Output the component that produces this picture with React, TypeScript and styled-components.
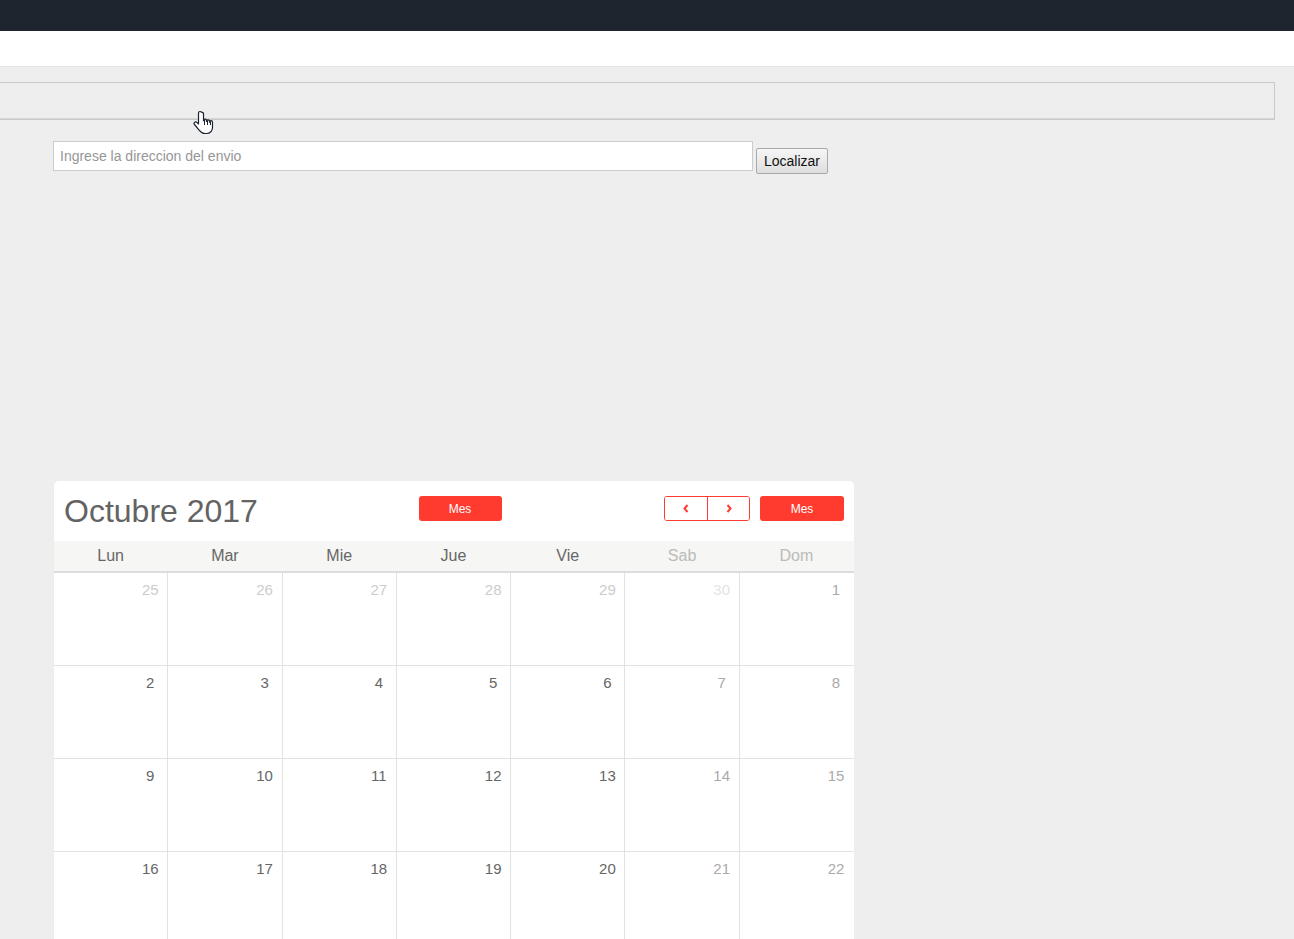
import React from "react";
import styled, { createGlobalStyle } from "styled-components";

const Global = createGlobalStyle`
  html, body { margin: 0; padding: 0; overflow: hidden; }
  body { background: #eeeeee; font-family: "Liberation Sans", Arial, sans-serif; }
  * { box-sizing: border-box; }
`;

const Page = styled.div`
  position: relative;
  height: 939px;
  overflow: hidden;
`;

const TopBar = styled.div`
  height: 31px;
  background: #1f252e;
`;

const WhiteBar = styled.div`
  height: 36px;
  background: #ffffff;
  border-bottom: 1px solid #e4e4e4;
`;

const Content = styled.div`
  padding-top: 15px;
`;

const FrameBox = styled.div`
  margin-left: -20px;
  width: 1295px;
  height: 38px;
  border: 1px solid #c9c9c9;
  box-shadow: inset 0 -1px 0 #d6d6d6;
`;

const SearchRow = styled.div`
  display: flex;
  align-items: flex-start;
  gap: 3px;
  padding-left: 53px;
  margin-top: 21px;
`;

const AddressInput = styled.input`
  width: 700px;
  height: 30px;
  border: 1px solid #cccccc;
  background: #ffffff;
  padding: 0 6px;
  font-family: "Liberation Sans", Arial, sans-serif;
  font-size: 14px;
  color: #333;
  outline: none;
  &::placeholder { color: #969696; }
`;

const LocateButton = styled.button`
  margin-top: 7px;
  height: 26px;
  width: 72px;
  padding: 0;
  border: 1px solid #a9a9a9;
  border-radius: 2px;
  background: linear-gradient(#f6f6f6, #dedede);
  font-family: "Liberation Sans", Arial, sans-serif;
  font-size: 14px;
  color: #111;
`;

const Calendar = styled.div`
  margin: 307px 0 0 54px;
  width: 800px;
  background: #ffffff;
  border-radius: 5px 5px 0 0;
`;

const CalHeader = styled.div`
  display: flex;
  align-items: flex-start;
  height: 60px;
  padding: 0 10px;
`;

const Side = styled.div<{ $end?: boolean }>`
  flex: 1;
  display: flex;
  justify-content: ${(p) => (p.$end ? "flex-end" : "flex-start")};
  gap: 10px;
  padding-top: 15px;
`;

const Title = styled.h2`
  margin: 0;
  margin-top: -3px;
  font-weight: normal;
  font-size: 32px;
  line-height: 36px;
  color: #636363;
`;

const RedButton = styled.button<{ $offset?: number; $w?: number }>`
  margin-top: 15px;
  margin-left: ${(p) => p.$offset ?? 0}px;
  width: ${(p) => p.$w ?? 83}px;
  height: 25px;
  border: none;
  border-radius: 3px;
  background: #ff3b30;
  color: #ffffff;
  font-family: "Liberation Sans", Arial, sans-serif;
  font-size: 12px;
  padding: 0;
`;

const NavGroup = styled.div`
  display: flex;
  height: 25px;
  border: 1px solid #ff3b30;
  border-radius: 3px;
  overflow: hidden;
`;

const NavButton = styled.button<{ $first?: boolean }>`
  width: ${(p) => (p.$first ? 43 : 41)}px;
  height: 23px;
  border: none;
  border-right: ${(p) => (p.$first ? "1px solid #ff3b30" : "none")};
  background: #ffffff;
  padding: 0;
  display: flex;
  align-items: center;
  justify-content: center;
`;

const DayHeader = styled.div`
  display: grid;
  grid-template-columns: repeat(7, 1fr);
  height: 32px;
  background: #f6f6f4;
  border-bottom: 2px solid #dcdcdc;
`;

const DayName = styled.div<{ $weekend?: boolean }>`
  text-align: center;
  font-size: 16px;
  line-height: 29px;
  padding-right: 1px;
  color: ${(p) => (p.$weekend ? "#bbbbbb" : "#666666")};
`;

const Week = styled.div`
  display: grid;
  grid-template-columns: repeat(7, 1fr);
  height: 93px;
  border-bottom: 1px solid #e2e2e2;
`;

const Cell = styled.div<{ $last?: boolean }>`
  display: flex;
  justify-content: flex-end;
  align-items: flex-start;
  border-right: ${(p) => (p.$last ? "none" : "1px solid #e2e2e2")};
  padding: 8px ${(p) => (p.$last ? 6 : 5)}px 0 0;
`;

const DateNum = styled.span<{ $color: string }>`
  width: 24px;
  text-align: center;
  font-size: 15px;
  line-height: 17px;
  color: ${(p) => p.$color};
`;

const Cursor = styled.svg`
  position: absolute;
  left: 193px;
  top: 110px;
`;

const Chevron = ({ dir }: { dir: "l" | "r" }) => (
  <svg width="6" height="9" viewBox="0 0 6 9">
    <polyline
      points={dir === "l" ? "4.5,1 1.5,4.5 4.5,8" : "1.5,1 4.5,4.5 1.5,8"}
      fill="none"
      stroke="#ff3b30"
      strokeWidth="2"
    />
  </svg>
);

const days = ["Lun", "Mar", "Mie", "Jue", "Vie", "Sab", "Dom"];

type D = { n: number; other: boolean };
const weeks: D[][] = (() => {
  const all: D[] = [];
  [25, 26, 27, 28, 29, 30].forEach((n) => all.push({ n, other: true }));
  for (let i = 1; i <= 31; i++) all.push({ n: i, other: false });
  for (let i = 1; all.length < 42; i++) all.push({ n: i, other: true });
  const w: D[][] = [];
  for (let i = 0; i < 6; i++) w.push(all.slice(i * 7, i * 7 + 7));
  return w;
})();

const colorFor = (d: D, col: number) => {
  const weekend = col >= 5;
  if (d.other) return weekend ? "#e4e4e4" : "#cccccc";
  return weekend ? "#aaaaaa" : "#666666";
};

export default function App() {
  return (
    <Page>
      <Global />
      <TopBar />
      <WhiteBar />
      <Content>
        <FrameBox />
        <SearchRow>
          <AddressInput placeholder="Ingrese la direccion del envio" />
          <LocateButton>Localizar</LocateButton>
        </SearchRow>
        <Calendar>
          <CalHeader>
            <Side>
              <Title>Octubre 2017</Title>
            </Side>
            <RedButton $offset={12}>Mes</RedButton>
            <Side $end>
              <NavGroup>
                <NavButton $first>
                  <Chevron dir="l" />
                </NavButton>
                <NavButton>
                  <Chevron dir="r" />
                </NavButton>
              </NavGroup>
              <RedButton $w={84} style={{ marginTop: 0 }}>
                Mes
              </RedButton>
            </Side>
          </CalHeader>
          <DayHeader>
            {days.map((d, i) => (
              <DayName key={d} $weekend={i >= 5}>
                {d}
              </DayName>
            ))}
          </DayHeader>
          {weeks.map((w, wi) => (
            <Week key={wi}>
              {w.map((d, ci) => (
                <Cell key={ci} $last={ci === 6}>
                  <DateNum $color={colorFor(d, ci)}>{d.n}</DateNum>
                </Cell>
              ))}
            </Week>
          ))}
        </Calendar>
      </Content>
      <Cursor width="22" height="26" viewBox="0 0 22 26">
        <path
          d="M7 1.5c-.9 0-1.5.7-1.5 1.6V14l-1.6-1.7c-.7-.7-1.8-.7-2.4 0-.6.6-.6 1.5 0 2.2l4.6 5.6c1.4 1.8 3.3 3.4 6 3.4h1.5c3.3 0 5.9-2.7 5.9-6v-5.3c0-.9-.7-1.6-1.5-1.6s-1.5.7-1.5 1.6v-.8c0-.9-.7-1.6-1.5-1.6s-1.5.7-1.5 1.6v-.7c0-.9-.7-1.6-1.5-1.6s-1.5.7-1.5 1.6V3.1C8.5 2.2 7.9 1.5 7 1.5z"
          fill="#ffffff"
          stroke="#1b2230"
          strokeWidth="1.2"
          strokeLinejoin="round"
        />
        <path d="M11.5 10v5M14.5 10.5v4.5M17.5 11.3v3.7" stroke="#1b2230" strokeWidth="1" />
      </Cursor>
    </Page>
  );
}
